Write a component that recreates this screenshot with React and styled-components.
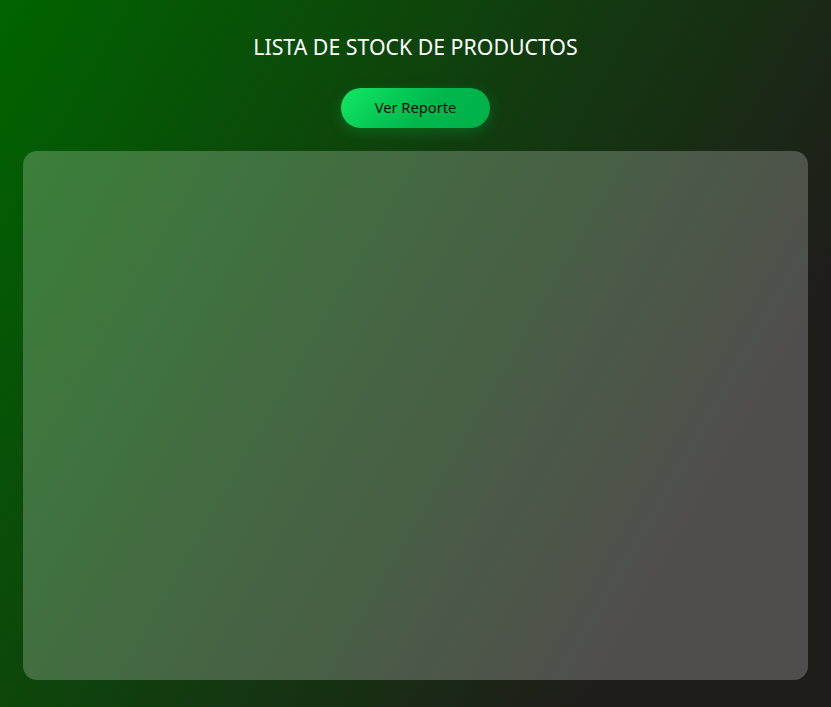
import React from "react";
import styled, { createGlobalStyle } from "styled-components";

const Global = createGlobalStyle`
  html, body { margin: 0; padding: 0; }
  body {
    font-family: "Noto Sans", "Open Sans", sans-serif;
    background: linear-gradient(120deg, #006400 0%, #1f1d1a 80%, #1f1d1a 100%);
    min-height: 707px;
  }
`;

const Page = styled.div`
  box-sizing: border-box;
  min-height: 707px;
  padding: 33px 23px 27px;
  display: flex;
  flex-direction: column;
  align-items: center;
`;

const Title = styled.h1`
  margin: 0;
  color: #ffffff;
  font-size: 21.3px;
  font-weight: 400;
  line-height: 27px;
`;

const Button = styled.button`
  margin-top: 28px;
  width: 149px;
  height: 40px;
  padding: 0 0 2px;
  border: none;
  border-radius: 20px;
  background: linear-gradient(135deg, #12e866 0%, #00b84c 55%, #00b04a 100%);
  color: #0a0a0a;
  font-family: "Noto Sans", "Open Sans", sans-serif;
  font-size: 14.7px;
  cursor: pointer;
  box-shadow: 0 4px 14px rgba(0, 200, 80, 0.25);
`;

const Card = styled.div`
  margin-top: 23px;
  align-self: stretch;
  height: 529px;
  border-radius: 14px;
  background: rgba(255, 255, 255, 0.22);
`;

export default function App() {
  return (
    <>
      <Global />
      <Page>
        <Title>LISTA DE STOCK DE PRODUCTOS</Title>
        <Button>Ver Reporte</Button>
        <Card />
      </Page>
    </>
  );
}
